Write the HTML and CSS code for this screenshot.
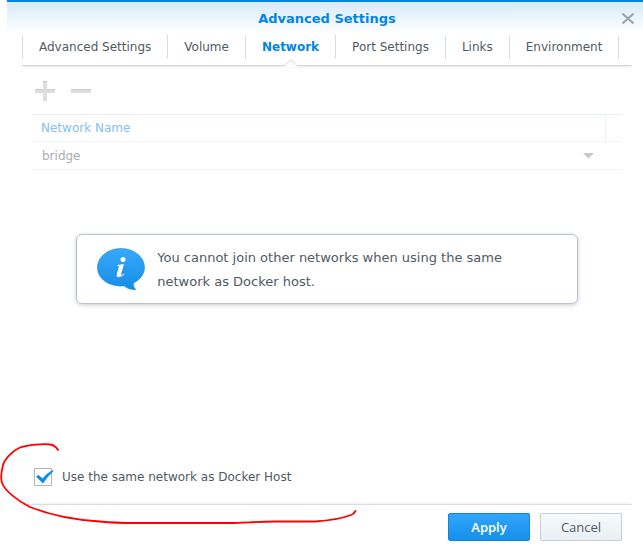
FILE: index.html
```html
<!DOCTYPE html>
<html lang="en">
<head>
<meta charset="utf-8">
<title>Advanced Settings</title>
<link rel="stylesheet" href="styles.css">
</head>
<body>
<main class="dialog">
  <header class="titlebar">
    <h1 class="title">Advanced Settings</h1>
    <button class="close" type="button" aria-label="Close">
      <svg width="12" height="11" viewBox="0 0 12 11"><path d="M.5.500 11.500 10.500M11.500.500.5 10.500" fill="none" stroke="#9ba4ad" stroke-width="2"/></svg>
    </button>
  </header>

  <nav class="tabs">
    <a class="tab" href="#advanced">Advanced Settings</a>
    <a class="tab" href="#volume">Volume</a>
    <a class="tab active" href="#network" aria-current="page">Network
      <svg class="notch" width="14" height="8" viewBox="0 0 14 8"><path d="M0 6.500H1L7 .700 13 6.500H14V8H0Z" fill="#fff"/><path d="M0 6.500H1L7 .700 13 6.500H14" fill="none" stroke="#d3d5d7"/></svg>
    </a>
    <a class="tab" href="#ports">Port Settings</a>
    <a class="tab" href="#links">Links</a>
    <a class="tab" href="#environment">Environment</a>
  </nav>

  <section class="content">
    <div class="toolbar">
      <button class="tool" type="button" aria-label="Add" disabled>
        <svg width="20" height="20" viewBox="0 0 20 20"><path d="M8 0h4v8h8v4h-8v8H8v-8H0V8h8Z" fill="#dcdddf"/><path d="M0 8h8v1H0zM12 8h8v1h-8zM8 0h4v1H8z" fill="#c9cacc"/></svg>
      </button>
      <button class="tool" type="button" aria-label="Remove" disabled>
        <svg width="20" height="20" viewBox="0 0 20 20"><path d="M0 8h20v4H0z" fill="#dcdddf"/><path d="M0 8h20v1H0z" fill="#c9cacc"/></svg>
      </button>
    </div>
    <table class="grid">
      <thead>
        <tr><th scope="col">Network Name</th><th class="spacer"></th></tr>
      </thead>
      <tbody>
        <tr>
          <td colspan="2">
            <div class="picker">
              <select aria-label="Network name" disabled><option>bridge</option></select>
              <svg width="11" height="6" viewBox="0 0 11 6"><path d="M0 0h11L5.500 5.500Z" fill="#c4c9cd"/></svg>
            </div>
          </td>
        </tr>
      </tbody>
    </table>

    <div class="notice" role="status">
      <svg class="bubble" width="48" height="42" viewBox="0 0 48 42">
        <defs><linearGradient id="blue" x1="0" y1="0" x2="0" y2="1"><stop offset="0" stop-color="#36a9fb"/><stop offset="1" stop-color="#168de6"/></linearGradient></defs>
        <path d="M24 .5C37 .5 47.500 9 47.500 19.500 47.500 26 43 32 36.500 35 36 38 37 40 39 41.500 34 42 30 40.500 27.500 38 12 39 .5 31 .5 19.500.5 9 11 .5 24 .5Z" fill="url(#blue)" stroke="#1688dc" stroke-opacity=".6"/>
        <circle cx="26" cy="11.500" r="2.500" fill="#fff"/>
        <path d="M20.500 17 27 16 24 26.500Q24 28 27 25.500L27.500 26Q24.500 29.500 21.500 29.300 19 29 19.800 26L22 18.300 20.300 17.800Z" fill="#fff"/>
      </svg>
      <p>You cannot join other networks when using the same network as Docker host.</p>
    </div>

    <label class="option">
      <span class="check">
        <input type="checkbox" checked>
        <svg width="18" height="14" viewBox="0 0 18 14"><path d="M0 6.500 2.500 5 6.500 8.500Q11 3 16 .5H18Q12 6 7 13.500Z" fill="#058cf0"/></svg>
      </span>
      Use the same network as Docker Host
    </label>
  </section>

  <footer class="footer">
    <button class="btn primary" type="button">Apply</button>
    <button class="btn" type="button">Cancel</button>
  </footer>

  <svg class="annotation" width="360" height="84" viewBox="0 0 360 84" aria-hidden="true">
    <path d="M58 7Q55 2 50 1.500C43 .5 28 2 20 4.500 14 7 5 15 3 22 1 30 1 38 2.500 41 5 47 16 57 30 64 50 72 75 77 100 78.500 115 80 125 80 135 80H230C245 80 255 78.500 275 78.500H315C330 77.500 343 75 351 72Q354 71 355.500 68" fill="none" stroke="#f00" stroke-width="1.800" stroke-linecap="round"/>
  </svg>
</main>
</body>
</html>
```
FILE: styles.css
```css
* { box-sizing: border-box; }

body {
  margin: 0;
  background: #fff;
  color: #505a64;
  font: 12px/24px "DejaVu Sans", Verdana, sans-serif;
}

button, select { font: inherit; color: inherit; }

.dialog {
  position: relative;
  display: flex;
  flex-direction: column;
  min-height: 100vh;
  padding-left: 7px;
}

.titlebar {
  display: grid;
  grid-template-columns: 1fr;
  align-items: center;
  height: 35px;
  border-top: 2px solid #0086e5;
  background: linear-gradient(#d8eafa, #fff 32px);
}

.title {
  grid-area: 1 / 1;
  margin: 0;
  padding-left: 4px;
  font-size: 13px;
  line-height: 32px;
  text-align: center;
  color: #0086e5;
}

.close {
  grid-area: 1 / 1;
  justify-self: end;
  display: flex;
  margin-right: 9px;
  padding: 0;
  border: 0;
  background: none;
}

.tabs {
  display: flex;
  height: 31px;
  margin: 0 11px 0 15px;
  border-bottom: 1px solid #d3d5d7;
  box-shadow: 0 2px 2px -1px #e6e7e8;
}

.tab {
  position: relative;
  height: 24px;
  padding: 0 16px;
  border-left: 1px solid #d5dfe9;
  color: inherit;
  text-decoration: none;
  white-space: nowrap;
}

.tab:last-child { border-right: 1px solid #d5dfe9; }

.active { color: #0086e5; font-weight: bold; }

.notch {
  position: absolute;
  top: 24px;
  left: calc(50% - 7px);
}

.content {
  display: flex;
  flex-direction: column;
  flex: 1;
  padding: 15px 21px 15px 25px;
}

.toolbar {
  display: flex;
  gap: 16px;
  padding: 0 3px 13px;
}

.tool {
  display: flex;
  padding: 0;
  border: 0;
  background: none;
}

.grid {
  width: 100%;
  border-collapse: collapse;
  border-top: 1px solid #e3eef8;
}

.grid tr { height: 28px; border-bottom: 1px solid #f3f4f5; }
.grid thead tr { height: 27px; }

.grid th {
  padding: 0 9px;
  text-align: left;
  font-weight: normal;
  color: #85c0f0;
}

.grid .spacer {
  width: 17px;
  padding: 0;
  border-left: 1px solid #f0f2f4;
}

.grid td { padding: 0 28px 0 10px; }

.picker {
  display: flex;
  align-items: center;
}

.picker select {
  flex: 1;
  padding: 0;
  border: 0;
  background: none;
  color: #a8adb2;
  opacity: 1;
  appearance: none;
}

.notice {
  display: flex;
  align-items: flex-start;
  gap: 12px;
  width: 85%;
  margin: 64px auto;
  padding: 11px 20px 9px;
  border: 1px solid #b9c3cf;
  border-radius: 6px;
  box-shadow: 0 1px 4px #c9cbce;
  font-size: 13px;
}

.notice p { margin: 0; max-width: 370px; }

.bubble { flex: none; margin-top: 2px; }

.option {
  display: flex;
  align-items: center;
  gap: 10px;
  margin-top: auto;
  padding-left: 2px;
}

.check {
  display: grid;
  grid-template-columns: 18px;
  align-items: center;
  justify-items: start;
}

.check input {
  grid-area: 1 / 1;
  width: 18px;
  height: 18px;
  margin: 0;
  border: 1px solid #adb7c2;
  background: #fff;
  appearance: none;
}

.check svg { grid-area: 1 / 1; margin-left: 2px; pointer-events: none; visibility: hidden; }
.check input:checked + svg { visibility: visible; }

.footer {
  display: flex;
  justify-content: flex-end;
  gap: 10px;
  margin: 0 11px 0 15px;
  padding: 8px 10px 5px;
  border-top: 1px solid #dcddde;
  box-shadow: 0 -2px 2px -1px #f0f0f0;
}

.btn {
  width: 82px;
  height: 28px;
  padding: 0;
  border: 1px solid #c3cfdb;
  border-radius: 2px;
  background: linear-gradient(#f7fafc, #e9eff4);
  font: 13px/24px "Open Sans", sans-serif;
}

.primary {
  border-color: #1583d8;
  background: linear-gradient(#31a5fd, #1690eb);
  color: #fff;
  font-weight: 600;
}

.annotation {
  position: absolute;
  left: 0;
  bottom: 19px;
  overflow: visible;
  pointer-events: none;
}
```
